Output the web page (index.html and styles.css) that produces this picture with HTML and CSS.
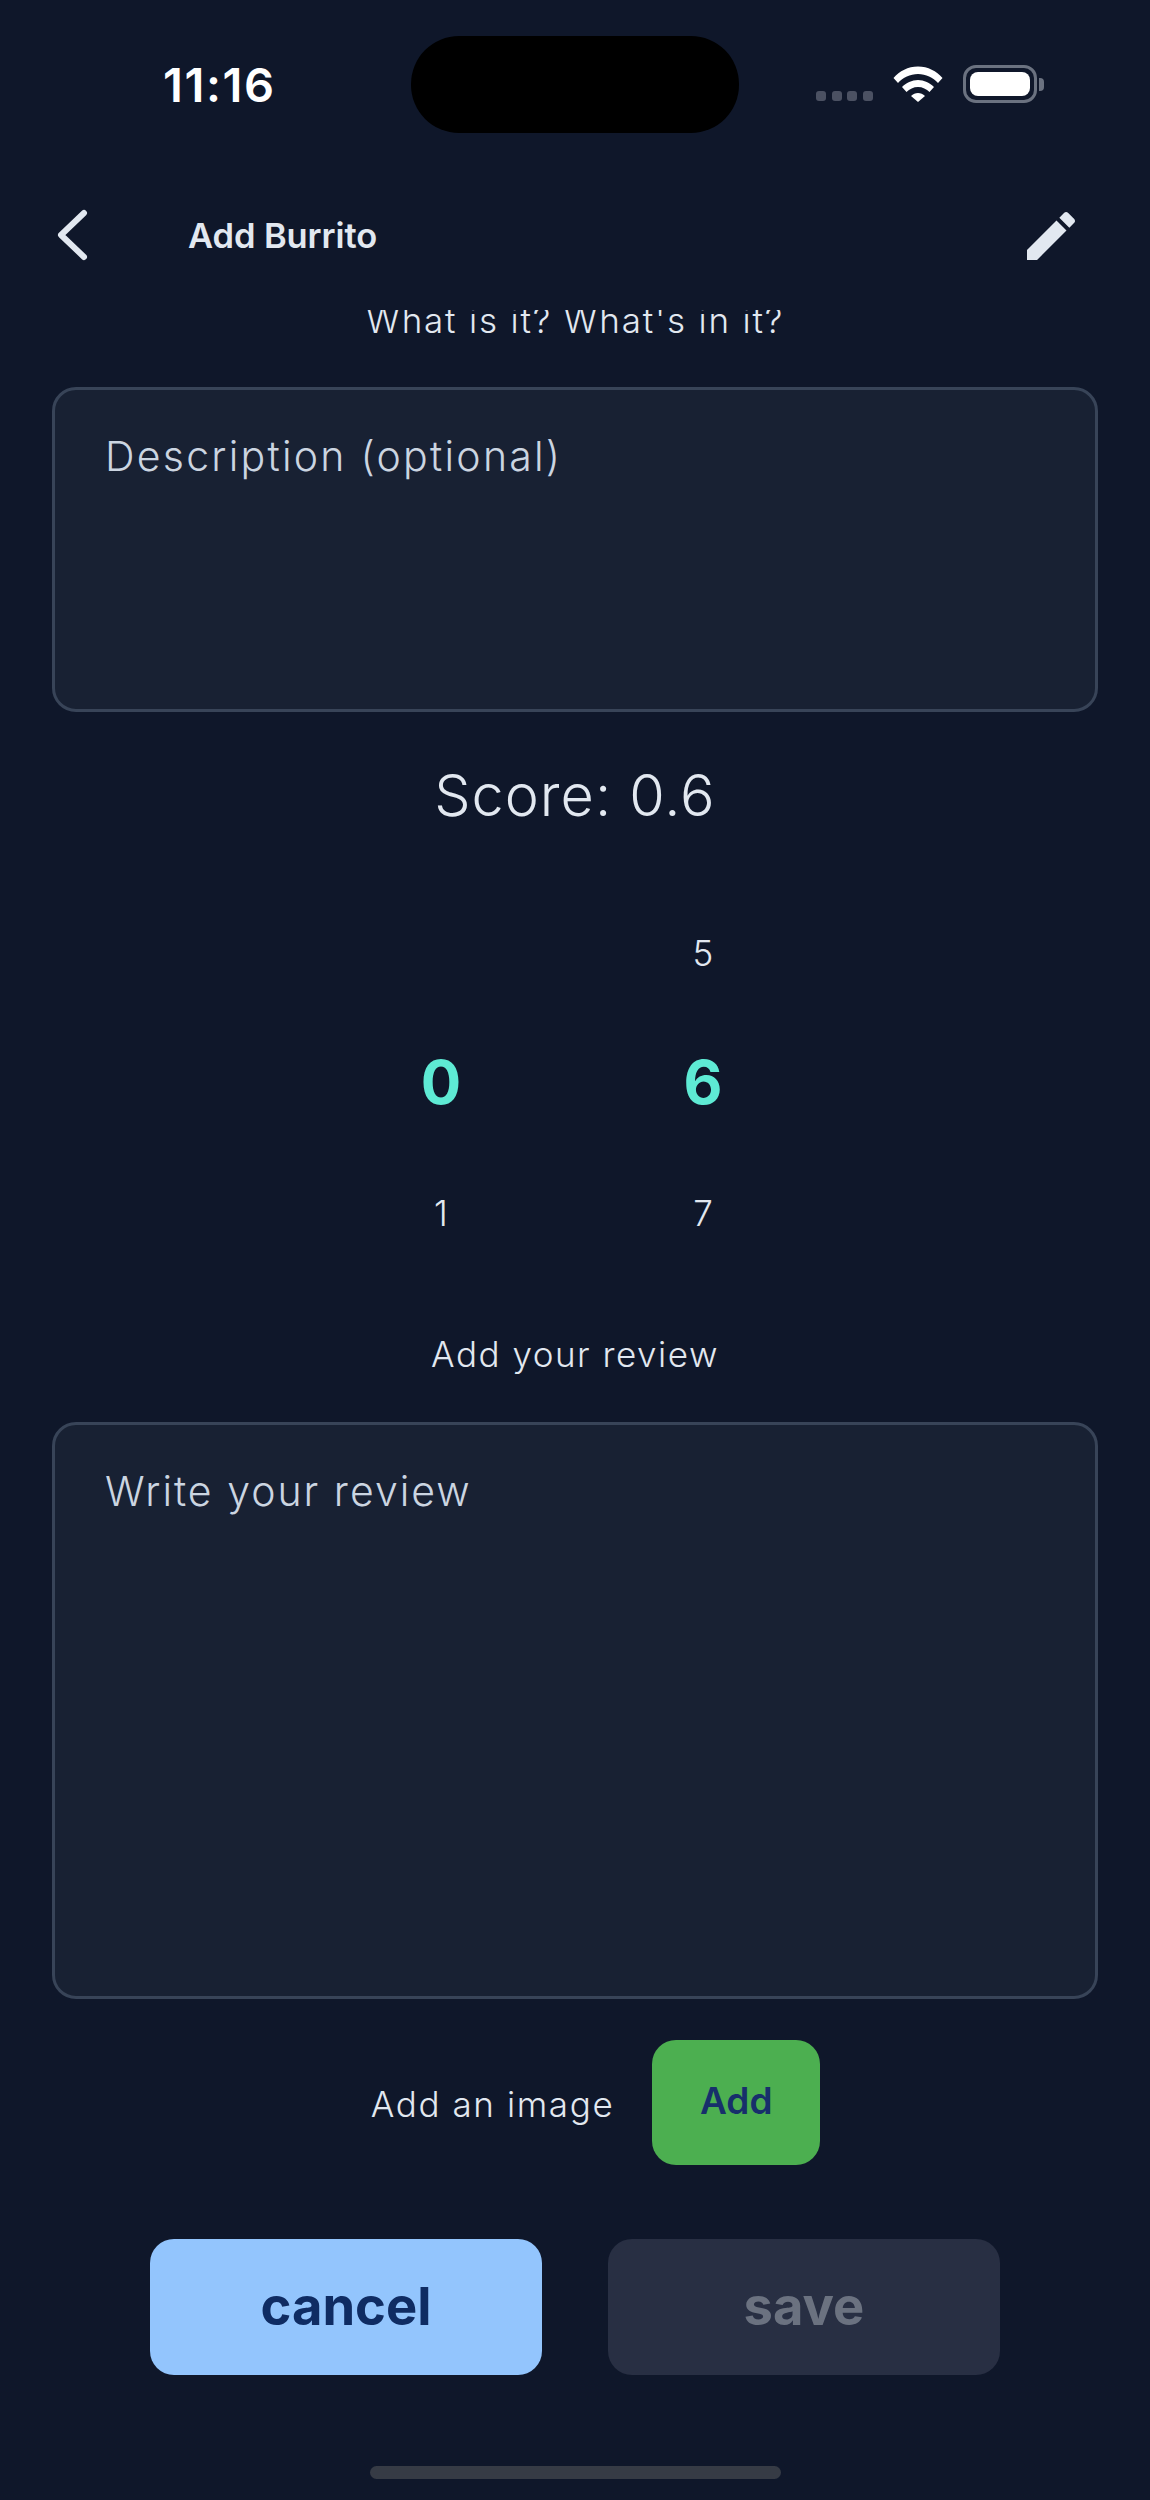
FILE: index.html
```html
<!DOCTYPE html>
<html lang="en">
<head>
<meta charset="utf-8">
<title>Add Burrito</title>
<link rel="stylesheet" href="styles.css">
</head>
<body>
<div class="screen">
  <div class="status">
    <div class="time">11:16</div>
    <div class="island"></div>
    <div class="indicators">
      <div class="signal"><i></i><i></i><i></i><i></i></div>
      <svg class="wifi" viewBox="0 0 50 36" width="50" height="36"><path d="M0.5 12C6.5 5 15 .5 25 .5S43.5 5 49.5 12L45 17C40 11.5 33 8 25 8S10 11.5 5 17Z"/><path d="M9 21C13 17 19 14 25 14S37 17 41 21L36.5 26C33.5 23 29.5 21 25 21S16.5 23 13.5 26Z"/><path d="M18 30C20 28 22.5 27 25 27S30 28 32 30L25 36Z"/></svg>
      <div class="battery"><div class="battery-body"><div class="battery-fill"></div></div><div class="battery-tip"></div></div>
    </div>
  </div>
  <div class="header">
    <svg class="back" viewBox="0 0 40 56" width="40" height="56"><path d="M31 6L8 28L31 50"/></svg>
    <div class="title">Add Burrito</div>
    <svg class="edit" viewBox="0 0 24 24" width="64" height="64"><path d="M3 17.25V21h3.75L17.81 9.94l-3.75-3.75L3 17.25zM20.71 7.04c.39-.39.39-1.02 0-1.41l-2.34-2.34c-.39-.39-1.02-.39-1.41 0l-1.83 1.83 3.75 3.75 1.83-1.83z"/></svg>
  </div>
  <div class="scroll">
    <div class="hint">What is it? What's in it?</div>
    <div class="field field-desc">Description (optional)</div>
    <div class="score">Score: 0.6</div>
    <div class="picker">
      <div class="cell"></div><div class="cell">5</div>
      <div class="cell selected">0</div><div class="cell selected">6</div>
      <div class="cell">1</div><div class="cell">7</div>
    </div>
    <div class="label-review">Add your review</div>
    <div class="field field-review">Write your review</div>
    <div class="image-row">
      <div class="image-label">Add an image</div>
      <div class="btn-add">Add</div>
    </div>
    <div class="actions">
      <div class="btn btn-cancel">cancel</div>
      <div class="btn btn-save">save</div>
    </div>
  </div>
  <div class="home-bar"></div>
</div>
</body>
</html>
```
FILE: styles.css
```css
* { box-sizing: border-box; }
html, body { margin: 0; padding: 0; background: #0f172a; }
body { font-family: Inter, "Liberation Sans", sans-serif; }
.screen { position: relative; width: 1150px; height: 2500px; overflow: hidden; background: #0f172a; color: #e2e8f0; }

.status { display: grid; grid-template-columns: 411px 328px 1fr; height: 176px; padding-top: 36px; align-items: start; }
.time { height: 97px; display: flex; align-items: center; padding-left: 163px; font-size: 47px; font-weight: 600; letter-spacing: 1.6px; color: #fff; }
.island { height: 97px; border-radius: 48px; background: #000; }
.indicators { display: flex; align-items: flex-end; padding: 29px 0 0 77px; }
.signal { display: flex; gap: 5.5px; margin-bottom: 1px; }
.signal i { display: block; width: 10px; height: 10px; border-radius: 3px; background: #4b5162; }
.wifi { margin-left: 20px; fill: #fff; }
.battery { display: flex; align-items: center; margin-left: 20px; margin-bottom: -1px; }
.battery-body { width: 74px; height: 38px; padding: 4px; border: 3px solid #6b7280; border-radius: 13px; }
.battery-fill { width: 100%; height: 100%; border-radius: 8px; background: #fff; }
.battery-tip { width: 5px; height: 13px; margin-left: 2px; border-radius: 0 4px 4px 0; background: #6b7280; }

.header { display: flex; align-items: flex-start; height: 134px; padding-top: 31px; }
.back { margin: 0 0 0 53px; fill: none; stroke: #e2e8f0; stroke-width: 6; stroke-linecap: round; stroke-linejoin: round; }
.title { margin-left: 95px; padding-top: 9px; font-size: 34.5px; line-height: 40px; font-weight: 600; letter-spacing: -0.1px; color: #e2e8f0; }
.edit { margin-top: -3px; margin-left: auto; margin-right: 67px; fill: #e2e8f0; }

.scroll { display: flex; flex-direction: column; align-items: center; height: 2190px; overflow: hidden; }
.hint { margin-top: -10px; font-size: 35px; line-height: 40px; font-weight: 300; letter-spacing: 1.8px; color: #e2e8f0; }
.field { align-self: stretch; margin: 0 52px; padding: 42px 50px; border: 3px solid #384458; border-radius: 24px; background: #182133; font-size: 41px; line-height: 48px; font-weight: 300; color: #cbd5e1; }
.field-desc { margin-top: 47px; height: 325px; letter-spacing: 2.25px; }
.score { margin-top: 50px; font-size: 57.5px; line-height: 66px; font-weight: 300; letter-spacing: 1px; color: #e2e8f0; }
.picker { display: grid; grid-template-columns: 262px 262px; grid-auto-rows: 130px; margin-top: 60px; padding-right: 6px; }
.cell { display: flex; align-items: center; justify-content: center; font-size: 35px; font-weight: 300; color: #e2e8f0; }
.cell.selected { padding-bottom: 3px; font-size: 60px; font-weight: 700; color: #5eead4; }
.label-review { margin-top: 55px; font-size: 35px; line-height: 42px; font-weight: 300; letter-spacing: 1.5px; color: #e2e8f0; }
.field-review { margin-top: 47px; height: 577px; letter-spacing: 2px; }
.image-row { display: flex; align-items: center; gap: 38px; margin-top: 41px; padding-left: 41px; }
.image-label { padding-top: 3px; font-size: 35px; line-height: 42px; font-weight: 300; letter-spacing: 1.6px; color: #e2e8f0; }
.btn-add { display: flex; align-items: center; justify-content: center; width: 168px; height: 125px; padding-bottom: 4px; border-radius: 24px; background: #4caf50; font-size: 37px; font-weight: 600; color: #172f6b; }
.actions { display: flex; gap: 66px; margin-top: 74px; }
.btn { display: flex; align-items: center; justify-content: center; width: 392px; height: 136px; padding-bottom: 2px; border-radius: 24px; font-size: 52.5px; font-weight: 700; }
.btn-cancel { background: #93c5fd; color: #0f2c63; }
.btn-save { background: #282f43; color: #6b7280; }

.home-bar { position: absolute; left: 370px; bottom: 21px; width: 411px; height: 13px; border-radius: 7px; background: #363b45; }
```
